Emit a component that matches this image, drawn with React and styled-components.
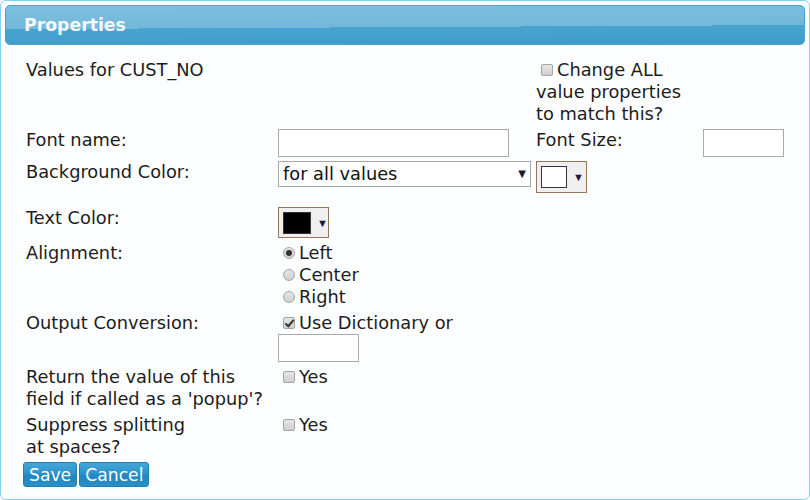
import React from 'react';
import styled, {createGlobalStyle} from 'styled-components';

const GlobalStyle = createGlobalStyle`
	html, body {
		margin: 0;
		padding: 0;
		background: #ffffff;
	}

	body {
		font-family: "DejaVu Sans", Verdana, sans-serif;
		color: #1c1c1c;
	}
`;

const Frame = styled.div`
	box-sizing: border-box;
	width: 810px;
	height: 500px;
	padding: 4px;
	border: 1px solid #84d2f2;
	border-radius: 6px;
	background: #fdfeff;
`;

const Header = styled.div`
	box-sizing: border-box;
	height: 40px;
	display: flex;
	align-items: center;
	padding: 0 18px 1px;
	border: 1px solid #4a9fcc;
	border-radius: 5px;
	background: linear-gradient(179.7deg, #7cc0df 0%, #72b8da 55%, #48a4cf 55%, #3f9cc8 100%);
	color: #f3f9fd;
	font-size: 17.3px;
	font-weight: bold;
`;

const Body = styled.div`
	padding: 14px 0 0 21px;
`;

const Grid = styled.div`
	display: grid;
	grid-template-columns: 252px 258px 167px 90px;
	row-gap: 4px;
	font-size: 17.8px;
	line-height: 22px;
`;

const Cell = styled.div`
	grid-column: ${({span}) => (span ? `span ${span}` : 'auto')};
	display: flex;
	flex-direction: column;
	align-items: flex-start;
`;

const TextInput = styled.input`
	box-sizing: border-box;
	width: ${({w}) => w}px;
	height: 28px;
	margin: 0;
	border: 1px solid #a9a9a9;
	background: #fff;
	font: inherit;
`;

const SelectWrap = styled.div`
	position: relative;
	width: 253px;
	height: 26px;
`;

const Select = styled.select`
	appearance: none;
	box-sizing: border-box;
	width: 100%;
	height: 100%;
	margin: 0;
	padding: 0 0 0 4px;
	border: 1px solid #a9a9a9;
	border-radius: 0;
	background: #fff;
	color: #111;
	font: inherit;
	font-size: 17.8px;
	line-height: 22px;
`;

const Arrow = styled.span`
	position: absolute;
	right: ${({right}) => right}px;
	top: 50%;
	transform: translateY(-50%);
	font-size: 10px;
	line-height: 10px;
	color: #1a1a2e;
	pointer-events: none;
`;

const ColorButton = styled.button`
	box-sizing: border-box;
	display: flex;
	align-items: center;
	gap: 6px;
	height: ${({h}) => h}px;
	width: 51px;
	margin: 0 0 ${({below}) => below || 0}px;
	padding: 0 0 0 4px;
	border: 1px solid #94775a;
	background: #efefef;
	cursor: pointer;

	&::after {
		content: '▼';
		font-size: 11px;
		color: #1a1a40;
	}
`;

const Swatch = styled.span`
	box-sizing: border-box;
	width: ${({w}) => w}px;
	height: 22px;
	border: 1px solid #333;
	background: ${({color}) => color};
`;

const Check = styled.label`
	display: flex;
	align-items: center;
	margin-left: 5px;
	white-space: nowrap;
`;

const Box = styled.input`
	appearance: none;
	box-sizing: border-box;
	width: 12px;
	height: 12px;
	margin: 0 4px 0 0;
	border: 1px solid #a5a5a5;
	border-radius: ${({type}) => (type === 'radio' ? '50%' : '2px')};
	background: linear-gradient(#e6e6e6, #cfcfcf);
	position: relative;

	&:checked::after {
		content: '';
		position: absolute;
		${({type}) =>
			type === 'radio'
				? `left: 2px; top: 2px; width: 6px; height: 6px; border-radius: 50%; background: #333;`
				: `left: 3px; top: 0px; width: 3px; height: 7px; border: solid #333; border-width: 0 2px 2px 0; transform: rotate(40deg);`}
	}
`;

const Wrapped = styled.div`
	white-space: nowrap;
`;

const Buttons = styled.div`
	display: flex;
	gap: 2px;
	margin: 4px 0 0 -3px;
`;

const Button = styled.button`
	box-sizing: border-box;
	height: 25px;
	padding: 0 5px;
	border: 1px solid #1f7fb3;
	border-radius: 3px;
	background: linear-gradient(#45a6d6 0%, #2c94cb 45%, #1f86bf 55%, #2a90c6 100%);
	color: #fff;
	font-family: "DejaVu Sans", Verdana, sans-serif;
	font-size: 17.2px;
	line-height: 22px;
	cursor: pointer;
`;

export default function App() {
	return (
		<Frame>
			<GlobalStyle />
			<Header>Properties</Header>
			<Body>
				<Grid>
					<Cell span={2}>Values for CUST_NO</Cell>
					<Cell span={2}>
						<Wrapped>
							<Check as="span" style={{display: 'inline-flex'}}>
								<Box type="checkbox" />Change ALL
							</Check>
							<br />
							value properties
							<br />
							to match this?
						</Wrapped>
					</Cell>

					<Cell>Font name:</Cell>
					<Cell>
						<TextInput w={231} />
					</Cell>
					<Cell>Font Size:</Cell>
					<Cell>
						<TextInput w={81} />
					</Cell>

					<Cell>Background Color:</Cell>
					<Cell>
						<SelectWrap>
							<Select defaultValue="all">
								<option value="all">for all values</option>
							</Select>
							<Arrow right={5}>▼</Arrow>
						</SelectWrap>
					</Cell>
					<Cell span={2}>
						<ColorButton h={32} below={10}>
							<Swatch w={26} color="#fff" />
						</ColorButton>
					</Cell>

					<Cell>Text Color:</Cell>
					<Cell span={3}>
						<ColorButton h={31}>
							<Swatch w={28} color="#000" />
						</ColorButton>
					</Cell>

					<Cell>Alignment:</Cell>
					<Cell span={3}>
						<Check>
							<Box type="radio" name="align" defaultChecked />Left
						</Check>
						<Check>
							<Box type="radio" name="align" />Center
						</Check>
						<Check>
							<Box type="radio" name="align" />Right
						</Check>
					</Cell>

					<Cell>Output Conversion:</Cell>
					<Cell span={3}>
						<Check>
							<Box type="checkbox" defaultChecked />Use Dictionary or
						</Check>
						<TextInput w={81} />
					</Cell>

					<Cell>
						<Wrapped>
							Return the value of this
							<br />
							field if called as a 'popup'?
						</Wrapped>
					</Cell>
					<Cell span={3}>
						<Check>
							<Box type="checkbox" />Yes
						</Check>
					</Cell>

					<Cell>
						<Wrapped>
							Suppress splitting
							<br />
							at spaces?
						</Wrapped>
					</Cell>
					<Cell span={3}>
						<Check>
							<Box type="checkbox" />Yes
						</Check>
					</Cell>
				</Grid>
				<Buttons>
					<Button>Save</Button>
					<Button>Cancel</Button>
				</Buttons>
			</Body>
		</Frame>
	);
}
